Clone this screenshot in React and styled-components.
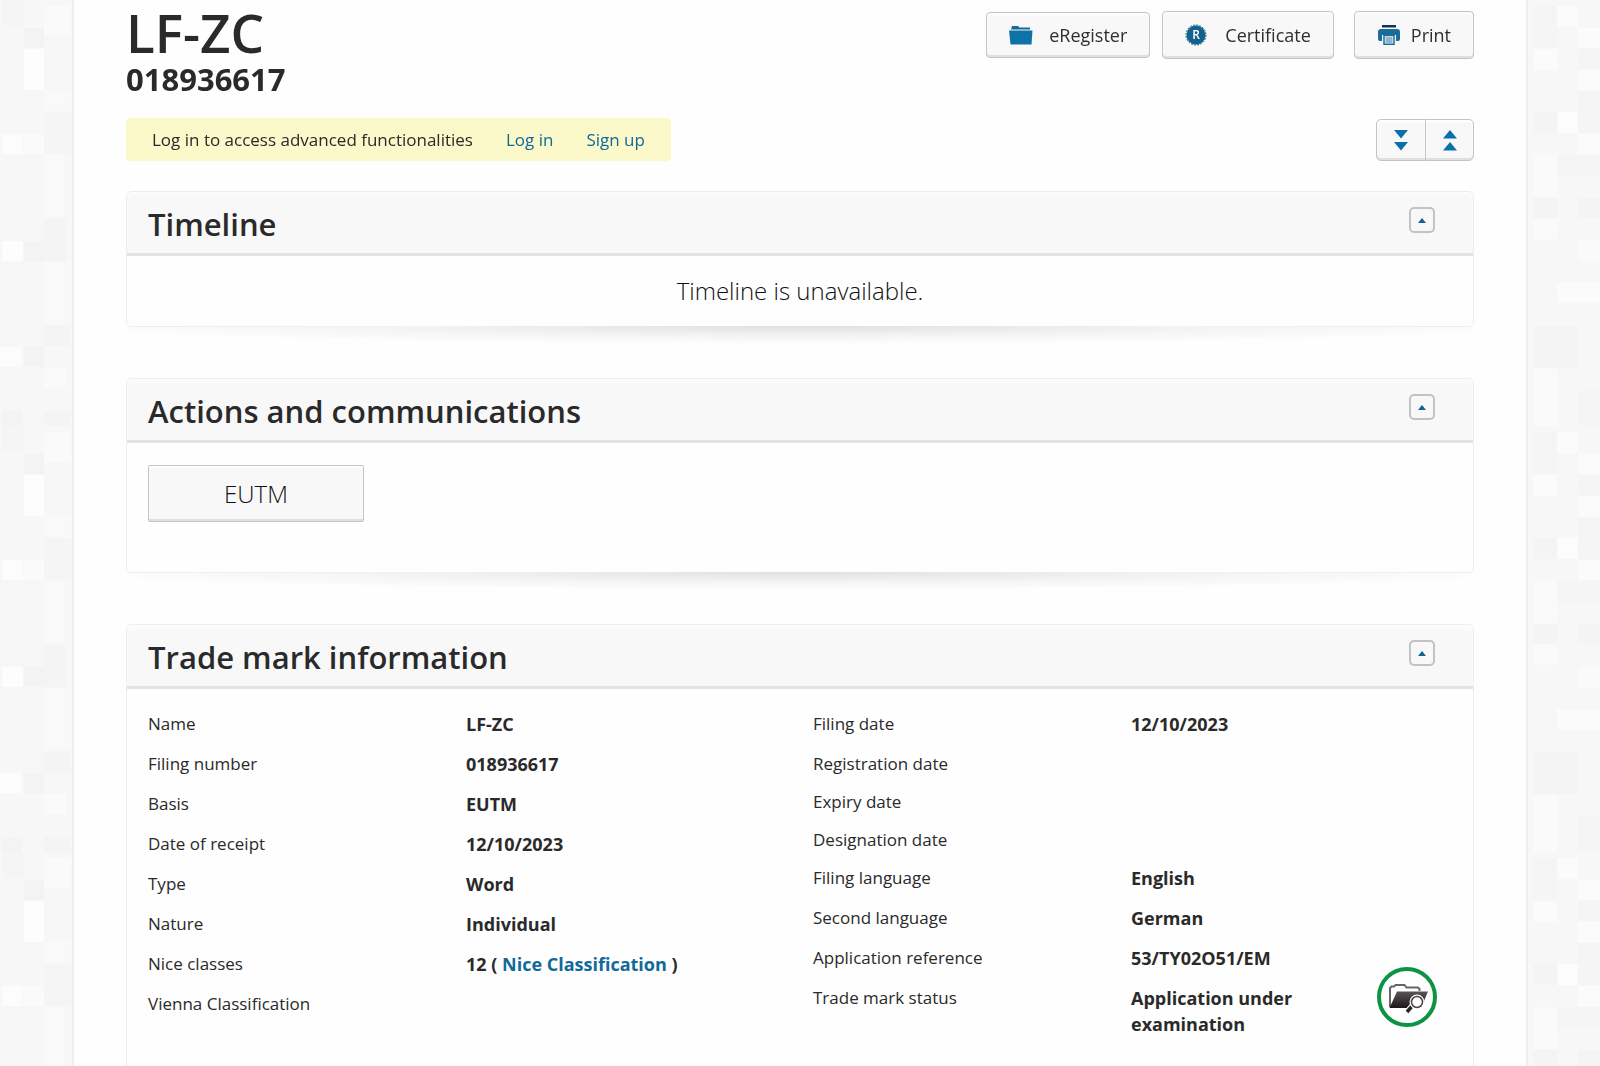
import React from 'react';
import styled, { createGlobalStyle } from 'styled-components';

const GlobalStyle = createGlobalStyle`
  * {
    box-sizing: border-box;
  }

  body {
    margin: 0;
    background-color: #f7f7f7;
    color: #2a2a2a;
    font-family: 'Open Sans', sans-serif;
  }

  a {
    color: #11699a;
    text-decoration: none;
  }
`;

const Backdrop = styled.svg`
  position: fixed;
  top: 0;
  left: 0;
  z-index: -1;
  width: 100%;
  height: 100%;
`;

const Sheet = styled.main`
  width: 91%;
  min-height: 100vh;
  margin: 0 auto;
  padding: 0 52px;
  background-color: #fefefe;
  border-left: 2px solid #eee;
  border-right: 2px solid #eee;
`;

const Header = styled.header`
  display: flex;
  justify-content: space-between;
  align-items: flex-start;
`;

const Title = styled.h1`
  margin: 0;
  padding-top: 3px;
  font-size: 53px;
  font-weight: 600;
  line-height: 60px;
`;

const Subtitle = styled.p`
  margin: 0;
  font-size: 31px;
  font-weight: 700;
  line-height: 32px;
`;

const Actions = styled.div`
  display: flex;
  align-items: center;
  padding-top: 11px;
`;

const Button = styled.button`
  display: flex;
  align-items: center;
  justify-content: center;
  background-color: #f8f8f8;
  border: 1px solid #c4c4c4;
  border-radius: 4px;
  box-shadow: inset 0 -2px 0 #e0e0e0, inset 0 2px 2px #fff;
  color: #2e2e2e;
  font-family: inherit;
  font-weight: 400;
  cursor: pointer;
`;

const ActionButton = styled(Button)`
  gap: ${props => props.$gap};
  height: ${props => props.$tall ? '48px' : '46px'};
  margin-left: ${props => props.$apart ? '20px' : '12px'};
  padding: 0 22px;
  font-size: 18px;
`;

const Toolbar = styled.div`
  display: flex;
  justify-content: space-between;
  align-items: center;
  margin: 23px 0 30px;
`;

const Notice = styled.p`
  display: flex;
  gap: 33px;
  margin: 0;
  padding: 0 26px;
  background-color: #fbf8c9;
  border-radius: 4px;
  font-size: 17px;
  line-height: 43px;
`;

const ToggleGroup = styled.div`
  display: flex;
`;

const ToggleButton = styled(Button)`
  width: ${props => props.$last ? '49px' : '50px'};
  height: 42px;
  padding: 0;
  border-radius: ${props => props.$last ? '0 5px 5px 0' : '5px 0 0 5px'};
  margin-left: ${props => props.$last ? '-1px' : '0'};
`;

const PanelBox = styled.section`
  position: relative;
  margin-bottom: 51px;
  background-color: #fefefe;
  border: 1px solid #ededed;
  border-radius: 5px;

  &::after {
    content: '';
    position: absolute;
    top: 100%;
    left: 0;
    right: 0;
    height: 18px;
    background: radial-gradient(55% 100% at 50% 0, #e0e0e0, #f2f2f2 50%, transparent);
  }
`;

const PanelHeader = styled.div`
  display: flex;
  justify-content: space-between;
  align-items: flex-start;
  height: 64px;
  padding: 15px 38px 0 21px;
  background-color: #f8f8f8;
  border-bottom: 3px solid #e3e3e3;
  border-radius: 5px 5px 0 0;
  box-shadow: inset 0 4px 3px #fcfcfc;
`;

const PanelTitle = styled.h2`
  margin: 0;
  font-size: 31px;
  font-weight: 600;
  line-height: 35px;
`;

const CollapseButton = styled(Button)`
  width: 26px;
  height: 26px;
  padding: 0;
  border: 2px solid #c2c2c2;
  border-radius: 5px;
  box-shadow: none;
`;

const Message = styled.p`
  margin: 0;
  color: #111;
  font-size: 24px;
  font-weight: 300;
  line-height: 70px;
  text-align: center;
`;

const Communications = styled.div`
  padding: 22px 21px 50px;
`;

const OfficeButton = styled(Button)`
  width: 216px;
  height: 57px;
  border-radius: 2px;
  color: #111;
  font-size: 24px;
  font-weight: 300;
`;

const Details = styled.div`
  display: grid;
  grid-template-columns: 1fr 1fr;
  column-gap: 26px;
  padding: 22px 21px 40px;
`;

const DetailList = styled.dl`
  margin: 0;
`;

const DetailRow = styled.div`
  display: grid;
  grid-template-columns: 318px 1fr auto;
  align-items: start;
  margin-bottom: ${props => props.$empty ? '12px' : '14px'};
`;

const Term = styled.dt`
  font-size: 17px;
  line-height: 26px;
`;

const Value = styled.dd`
  max-width: 240px;
  margin: 0;
  font-size: 18px;
  font-weight: 700;
  line-height: 26px;
`;

const StatusIcon = styled.svg`
  width: 60px;
  height: 60px;
  margin: -18px 15px -18px 0;
`;

const FolderIcon = () => (
  <svg width="24" height="20" viewBox="0 0 24 20" fill="#0c72a8" aria-hidden="true">
    <path d="M3 1h6l1.500 1.500H21v2H2z" fill="#1b6a94" />
    <path d="M0 5.500h23.500l-1 14H1.500z" />
  </svg>
);

const SealIcon = () => (
  <svg width="22" height="22" viewBox="0 0 22 22" aria-hidden="true">
    <circle cx="11" cy="11" r="9.500" fill="#14618c" />
    <circle cx="11" cy="11" r="10" fill="none" stroke="#14618c" strokeWidth="1" strokeDasharray="2 1.140" />
    <text x="11" y="15" fill="#fff" fontSize="12" fontWeight="600" textAnchor="middle">R</text>
  </svg>
);

const PrintIcon = () => (
  <svg width="24" height="22" viewBox="0 0 24 22" aria-hidden="true">
    <path d="M5 1h14v2.500H5z" fill="#16344f" />
    <path d="M4 5h16a3 3 0 0 1 3 3v7a2 2 0 0 1-2 2h-2v-6H5v6H3a2 2 0 0 1-2-2V8a3 3 0 0 1 3-3z" fill="#1b6b9a" />
    <path d="M7 11.500h10v8.700H7z" fill="#fff" stroke="#1b6b9a" strokeWidth="1.500" />
    <path d="M8.500 14h7M8.500 16h7M8.500 18h7" stroke="#1b6b9a" strokeWidth="1" />
  </svg>
);

const ExpandIcon = () => (
  <svg width="14" height="22" viewBox="0 0 14 22" fill="#0a70ab" aria-hidden="true">
    <path d="M0 1h14L7 9.500zM0 13h14l-7 8.500z" />
  </svg>
);

const CollapseIcon = () => (
  <svg width="14" height="22" viewBox="0 0 14 22" fill="#0a70ab" aria-hidden="true">
    <path d="M0 9.500h14L7 1zM0 21.500h14L7 13z" />
  </svg>
);

const ExaminationIcon = () => (
  <StatusIcon viewBox="0 0 60 60" role="img" aria-label="Application under examination">
    <defs>
      <linearGradient id="folder" x1="0" y1="0" x2="0" y2="1">
        <stop offset="0" stopColor="#5a5456" />
        <stop offset="1" stopColor="#1d1719" />
      </linearGradient>
    </defs>
    <circle cx="30" cy="30" r="28" fill="#fff" stroke="#0d9442" strokeWidth="4" />
    <path d="M13 40V21l1.500-1.500H17L18.500 18h9l2 2.500h11.500l1.500 1.500v2" fill="none" stroke="#666" strokeWidth="2" />
    <path d="M20 24.500h31l-7 16.500H12.500z" fill="url(#folder)" />
    <path d="M37 37l-7 8" stroke="#fff" strokeWidth="6" />
    <path d="M36 38l-6 7" stroke="#2b2427" strokeWidth="3.500" />
    <circle cx="40" cy="35" r="5.500" fill="#fff" stroke="#fff" strokeWidth="4" />
    <circle cx="40" cy="35" r="5.500" fill="#fff" stroke="#444" strokeWidth="1.500" />
  </StatusIcon>
);

/* x, y, width, height, colour of the pale blocks behind the sheet */
const blocks = [
  [2, 0, 22, 26, '#f5f5f5'],
  [44, 6, 27, 30, '#fafafa'],
  [24, 28, 20, 20, '#f3f3f3'],
  [24, 49, 20, 41, '#fdfdfd'],
  [44, 90, 27, 21, '#f9f9f9'],
  [44, 112, 27, 42, '#f5f5f5'],
  [2, 134, 20, 20, '#fcfcfc'],
  [22, 134, 22, 20, '#fafafa'],
  [44, 155, 20, 62, '#f9f9f9'],
  [2, 155, 42, 62, '#f6f6f6'],
  [44, 219, 22, 42, '#f4f4f4'],
  [2, 241, 21, 20, '#fdfdfd'],
  [24, 241, 20, 20, '#f3f3f3'],
  [44, 262, 27, 62, '#f9f9f9'],
  [44, 326, 27, 20, '#f4f4f4'],
  [0, 347, 22, 20, '#fcfcfc'],
  [24, 347, 20, 20, '#f3f3f3'],
  [44, 368, 22, 20, '#fafafa'],
  [2, 411, 20, 15, '#f3f3f3'],
  [44, 411, 27, 15, '#f4f4f4'],
  [279, 6, 21, 21, '#fbfbfb'],
  [255, 6, 24, 42, '#f5f5f5'],
  [300, 28, 22, 20, '#fbfbfb'],
  [255, 49, 24, 21, '#fbfbfb'],
  [300, 49, 22, 20, '#f5f5f5'],
  [300, 70, 22, 21, '#fbfbfb'],
  [300, 91, 22, 42, '#f5f5f5'],
  [255, 112, 24, 21, '#f4f4f4'],
  [279, 112, 21, 21, '#fcfcfc'],
  [300, 134, 22, 20, '#fbfbfb'],
  [255, 155, 24, 42, '#fafafa'],
  [279, 155, 43, 21, '#f5f5f5'],
  [255, 198, 24, 20, '#f4f4f4'],
  [300, 198, 22, 20, '#f4f4f4'],
  [255, 219, 24, 20, '#fafafa'],
  [300, 241, 22, 20, '#fafafa'],
  [279, 283, 43, 20, '#fbfbfb'],
  [255, 326, 45, 42, '#f4f4f4'],
  [255, 369, 24, 62, '#fafafa'],
  [300, 390, 22, 36, '#f5f5f5'],
];

const Mosaic = () => (
  <Backdrop aria-hidden="true">
    <defs>
      <pattern id="mosaic" width="426" height="426" patternUnits="userSpaceOnUse">
        {blocks.map(([x, y, width, height, fill]) => (
          <rect key={`${x}-${y}`} x={x} y={y} width={width} height={height} fill={fill} />
        ))}
      </pattern>
    </defs>
    <rect width="100%" height="100%" fill="url(#mosaic)" />
  </Backdrop>
);

const Panel = ({ title, children }) => (
  <PanelBox>
    <PanelHeader>
      <PanelTitle>{title}</PanelTitle>
      <CollapseButton type="button" aria-label={`Collapse ${title}`}>
        <svg width="8" height="5" viewBox="0 0 8 5" fill="#0f6595" aria-hidden="true">
          <path d="M0 5h8L4 0z" />
        </svg>
      </CollapseButton>
    </PanelHeader>
    {children}
  </PanelBox>
);

const leftDetails = [
  { term: 'Name', value: 'LF-ZC' },
  { term: 'Filing number', value: '018936617' },
  { term: 'Basis', value: 'EUTM' },
  { term: 'Date of receipt', value: '12/10/2023' },
  { term: 'Type', value: 'Word' },
  { term: 'Nature', value: 'Individual' },
  { term: 'Nice classes', value: <>12 ( <a href="#nice">Nice Classification</a> )</> },
  { term: 'Vienna Classification' },
];

const rightDetails = [
  { term: 'Filing date', value: '12/10/2023' },
  { term: 'Registration date' },
  { term: 'Expiry date' },
  { term: 'Designation date' },
  { term: 'Filing language', value: 'English' },
  { term: 'Second language', value: 'German' },
  { term: 'Application reference', value: '53/TY02O51/EM' },
  { term: 'Trade mark status', value: 'Application under examination', icon: <ExaminationIcon /> },
];

const DetailColumn = ({ items }) => (
  <DetailList>
    {items.map(({ term, value, icon }) => (
      <DetailRow key={term} $empty={!value}>
        <Term>{term}</Term>
        <Value>{value}</Value>
        {icon}
      </DetailRow>
    ))}
  </DetailList>
);

/* the detail page of one trade mark */
const App = () => {
  return (
    <>
      <GlobalStyle />
      <Mosaic />
      <Sheet>
        <Header>
          <div>
            <Title>LF-ZC</Title>
            <Subtitle>018936617</Subtitle>
          </div>
          <Actions>
            <ActionButton type="button" $gap="16px"><FolderIcon />eRegister</ActionButton>
            <ActionButton type="button" $gap="18px" $tall><SealIcon />Certificate</ActionButton>
            <ActionButton type="button" $gap="10px" $tall $apart><PrintIcon />Print</ActionButton>
          </Actions>
        </Header>
        <Toolbar>
          <Notice>
            Log in to access advanced functionalities
            <a href="#login">Log in</a>
            <a href="#signup">Sign up</a>
          </Notice>
          <ToggleGroup>
            <ToggleButton type="button" aria-label="Expand all"><ExpandIcon /></ToggleButton>
            <ToggleButton type="button" aria-label="Collapse all" $last><CollapseIcon /></ToggleButton>
          </ToggleGroup>
        </Toolbar>
        <Panel title="Timeline">
          <Message>Timeline is unavailable.</Message>
        </Panel>
        <Panel title="Actions and communications">
          <Communications>
            <OfficeButton type="button">EUTM</OfficeButton>
          </Communications>
        </Panel>
        <Panel title="Trade mark information">
          <Details>
            <DetailColumn items={leftDetails} />
            <DetailColumn items={rightDetails} />
          </Details>
        </Panel>
      </Sheet>
    </>
  );
}

export default App;
